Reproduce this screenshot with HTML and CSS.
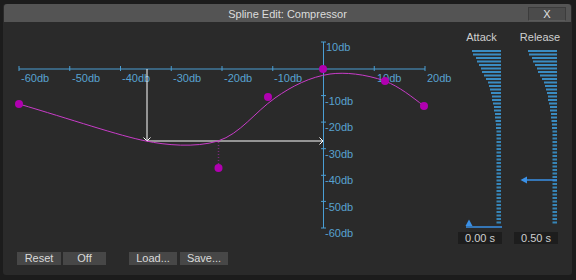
FILE: index.html
```html
<!DOCTYPE html>
<html>
<head>
<meta charset="utf-8">
<link rel="stylesheet" href="styles.css">
</head>
<body>
<div class="window">
  <div class="titlebar">
    <div class="title">Spline Edit: Compressor</div>
    <div class="close">X</div>
  </div>
  <div class="main">
    <div class="graph-col">
      <svg class="graph" width="447" height="228" viewBox="3 22 447 228">
        <g class="axis">
          <line x1="19" y1="69" x2="425" y2="69"/>
          <line x1="19" y1="66" x2="19" y2="71"/>
          <line x1="69.75" y1="66" x2="69.75" y2="71"/>
          <line x1="120.5" y1="66" x2="120.5" y2="71"/>
          <line x1="171.25" y1="66" x2="171.25" y2="71"/>
          <line x1="222" y1="66" x2="222" y2="71"/>
          <line x1="272.75" y1="66" x2="272.75" y2="71"/>
          <line x1="374.25" y1="66" x2="374.25" y2="71"/>
          <line x1="425" y1="66" x2="425" y2="71"/>
          <line x1="323.5" y1="42" x2="323.5" y2="228"/>
          <line x1="321" y1="42" x2="326" y2="42"/>
          <line x1="321" y1="95.6" x2="326" y2="95.6"/>
          <line x1="321" y1="122.1" x2="326" y2="122.1"/>
          <line x1="321" y1="148.7" x2="326" y2="148.7"/>
          <line x1="321" y1="175.3" x2="326" y2="175.3"/>
          <line x1="321" y1="201.4" x2="326" y2="201.4"/>
          <line x1="321" y1="228" x2="326" y2="228"/>
        </g>
        <g class="axis-label">
          <text x="21" y="82">-60db</text>
          <text x="72" y="82">-50db</text>
          <text x="122" y="82">-40db</text>
          <text x="173" y="82">-30db</text>
          <text x="224" y="82">-20db</text>
          <text x="274" y="82">-10db</text>
          <text x="377" y="82">10db</text>
          <text x="427" y="82">20db</text>
          <text x="326" y="51">10db</text>
          <text x="325" y="105">-10db</text>
          <text x="325" y="131">-20db</text>
          <text x="325" y="158">-30db</text>
          <text x="325" y="184">-40db</text>
          <text x="325" y="211">-50db</text>
          <text x="325" y="237">-60db</text>
        </g>
        <g class="arrow">
          <line x1="147" y1="69" x2="147" y2="141"/>
          <polyline points="143.5,137.5 147,141 150.5,137.5"/>
          <line x1="147" y1="141" x2="323" y2="141"/>
          <polyline points="319.5,137.5 323,141 319.5,144.5"/>
        </g>
        <path class="curve" d="M19,104 C70,119 120,136 146,141 C165,145 195,148 218,141 C240,134 255,112 275,98 C292,86 310,77 330,74 C345,72 365,74 385,81 C400,87 412,97 424,106"/>
        <line class="guide" x1="218.5" y1="142" x2="218.5" y2="164"/>
        <g class="dot">
          <circle cx="19" cy="104" r="4"/>
          <circle cx="268" cy="97" r="4"/>
          <circle cx="323" cy="69" r="4"/>
          <circle cx="385" cy="81" r="4"/>
          <circle cx="424" cy="106" r="4"/>
          <circle cx="218.5" cy="168" r="4"/>
        </g>
      </svg>
      <div class="buttons">
        <div class="btn reset">Reset</div>
        <div class="btn off">Off</div>
        <div class="btn load">Load...</div>
        <div class="btn save">Save...</div>
      </div>
    </div>
    <div class="meters">
      <div class="meter">
        <div class="meter-label attack"><span>Attack</span></div>
        <svg class="meter-svg" width="44" height="186" viewBox="0 0 44 186">
          <g id="bars" class="bars">
            <rect x="14" y="6" width="29" height="2"/>
            <rect x="15" y="9.5" width="28" height="2"/>
            <rect x="18" y="13" width="25" height="2"/>
            <rect x="19" y="16.5" width="24" height="2"/>
            <rect x="21" y="20" width="22" height="2"/>
            <rect x="23" y="23.5" width="20" height="2"/>
            <rect x="24" y="27" width="19" height="2"/>
            <rect x="26" y="30.5" width="17" height="2"/>
            <rect x="28" y="34" width="15" height="2"/>
            <rect x="30" y="37.5" width="13" height="2"/>
            <rect x="31" y="41" width="12" height="2"/>
            <rect x="32" y="44.5" width="11" height="2"/>
            <rect x="33" y="48" width="10" height="2"/>
            <rect x="34" y="51.5" width="9" height="2"/>
            <rect x="34" y="55" width="9" height="2"/>
            <rect x="35" y="58.5" width="8" height="2"/>
            <rect x="36" y="62" width="7" height="2"/>
            <rect x="36" y="65.5" width="7" height="2"/>
            <rect x="37" y="69" width="6" height="2"/>
            <rect x="37" y="72.5" width="6" height="2"/>
            <rect x="37.5" y="76" width="5.5" height="2"/>
            <rect x="38" y="79.5" width="5" height="2"/>
            <rect x="38" y="83" width="5" height="2"/>
            <line class="bars-tail" x1="40.75" y1="86.5" x2="40.75" y2="179.5"/>
          </g>
          <line class="ind-line" x1="8" y1="183" x2="44" y2="183"/>
          <polygon class="ind" points="11,175.5 7.5,182 14.5,182"/>
        </svg>
        <div class="value">0.00 s</div>
      </div>
      <div class="meter">
        <div class="meter-label release"><span>Release</span></div>
        <svg class="meter-svg" width="44" height="186" viewBox="0 0 44 186">
          <use href="#bars"/>
          <line class="ind-line" x1="8" y1="136" x2="43" y2="136"/>
          <polygon class="ind" points="6.5,136 13,132.5 13,139.5"/>
        </svg>
        <div class="value">0.50 s</div>
      </div>
    </div>
  </div>
</div>
</body>
</html>
```
FILE: styles.css
```css
html, body {
  margin: 0;
  padding: 0;
}
body {
  width: 576px;
  height: 280px;
  overflow: hidden;
  background: #1c1c1c;
  font-family: "Liberation Sans", Arial, sans-serif;
  font-size: 11px;
}
.window {
  margin: 4px 0 0 3px;
  width: 569px;
  height: 271px;
  background: #2a2a2a;
  border-radius: 3px;
  display: flex;
  flex-direction: column;
}
.titlebar {
  margin: 0 1px;
  height: 18px;
  background: #545454;
  border-radius: 3px 3px 0 0;
  display: grid;
  grid-template-columns: 1fr auto 1fr;
  align-items: center;
}
.title {
  grid-column: 2;
  color: #dcdcdc;
  line-height: 18px;
  padding-top: 1px;
}
.close {
  grid-column: 3;
  justify-self: end;
  align-self: start;
  margin-top: 3px;
  margin-right: 5px;
  width: 38px;
  height: 14px;
  box-sizing: border-box;
  border: 1px solid #3c3c3c;
  border-bottom-color: #5a5a5a;
  background: #4b4b4b;
  color: #e0e0e0;
  text-align: center;
  line-height: 12px;
}
.main {
  display: flex;
  flex: 1;
}
.graph-col {
  width: 447px;
  display: flex;
  flex-direction: column;
}
.graph {
  display: block;
  overflow: visible;
}
.axis line {
  stroke: #4a9ed4;
  stroke-width: 1;
}
.axis-label {
  font-family: "Liberation Sans", Arial, sans-serif;
  font-size: 11px;
  fill: #58a2d0;
}
.arrow line, .arrow polyline {
  stroke: #ffffff;
  stroke-width: 1;
  fill: none;
}
.curve {
  fill: none;
  stroke: #c83cc8;
  stroke-width: 1;
}
.guide {
  stroke: #7a2a7a;
  stroke-width: 1.5;
  stroke-dasharray: 1 2;
}
.dot circle {
  fill: #b000b0;
}
.buttons {
  display: flex;
  margin-top: 2px;
  padding-left: 14px;
}
.btn {
  height: 13px;
  line-height: 13px;
  background: #474747;
  color: #dadada;
  text-align: center;
}
.reset { width: 44px; }
.off { width: 43px; margin-left: 2px; }
.load { width: 48px; margin-left: 23px; }
.save { width: 48px; margin-left: 3px; }
.meters {
  display: flex;
  gap: 12px;
  padding-left: 8px;
}
.meter {
  width: 44px;
  display: flex;
  flex-direction: column;
}
.meter-label {
  margin-top: 8px;
  height: 14px;
  line-height: 14px;
  color: #cfcfcf;
  display: flex;
  justify-content: center;
  white-space: nowrap;
}
.meter-label.attack { padding-left: 3px; }
.meter-label.release { padding-left: 8px; }
.meter-svg {
  display: block;
}
.bars rect {
  fill: #3a8cc2;
}
.bars-tail {
  stroke: #3685b8;
  stroke-width: 4.5;
  stroke-dasharray: 2 1.5;
}
.ind-line {
  stroke: #3a90e6;
  stroke-width: 1.5;
}
.ind {
  fill: #3a90e6;
}
.value {
  margin-top: 2px;
  height: 12px;
  line-height: 12px;
  background: #1d1d1d;
  color: #cfcfcf;
  text-align: center;
}
```
